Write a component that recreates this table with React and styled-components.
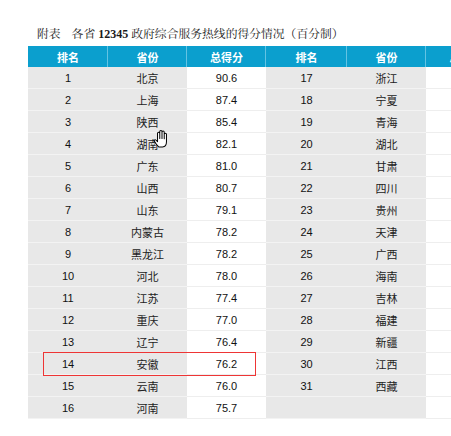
import React from "react";
import styled, { createGlobalStyle } from "styled-components";

const GlobalStyle = createGlobalStyle`
  html, body { margin: 0; padding: 0; background: #ffffff; overflow: hidden; }
  #root { width: 451px; height: 436px; overflow: hidden; }
`;

const Page = styled.div`
  position: relative;
  width: 451px;
  height: 436px;
  overflow: hidden;
  padding-top: 26px;
  box-sizing: border-box;
  background: #ffffff;
  font-family: "Liberation Sans", "Noto Sans CJK SC", sans-serif;
`;

const Title = styled.div`
  margin-left: 37px;
  height: 14px;
  line-height: 14px;
  font-size: 11.8px;
  color: #1a1a1a;
  white-space: nowrap;
  font-family: "Noto Serif CJK SC", "Liberation Serif", "Noto Sans CJK SC", serif;
`;

const Label = styled.span`
  margin-right: 11px;
`;

const Num = styled.b`
  font-family: "Liberation Serif", serif;
  font-weight: 700;
  font-size: 12px;
`;

const Table = styled.div`
  margin-top: 6px;
  margin-left: 28px;
  width: 478px;
  display: grid;
  grid-template-columns: 80px 79px 79px 81px 79px 80px;
`;

const HeadCell = styled.div`
  height: 21px;
  background: #0b9fce;
  color: #ffffff;
  font-family: "Noto Sans CJK SC", sans-serif;
  font-weight: 700;
  font-size: 11px;
  display: flex;
  align-items: center;
  justify-content: center;
  box-shadow: inset -1px 0 0 #63c3e3;
`;

const Cell = styled.div`
  height: 21px;
  border-bottom: 1px solid ${(p) => (p.$white ? "#eeeeee" : "#f3f3f3")};
  background: ${(p) => (p.$white ? "#ffffff" : "#e8e8e8")};
  color: ${(p) => (p.$cjk ? "#222222" : "#111111")};
  font-size: 11px;
  display: flex;
  align-items: center;
  justify-content: center;
  font-family: ${(p) =>
    p.$cjk ? `"Noto Sans CJK SC", sans-serif` : `"Liberation Sans", Arial, sans-serif`};
  font-weight: 400;
`;

const Highlight = styled.div`
  position: absolute;
  left: 43px;
  top: 352px;
  width: 213px;
  height: 24px;
  box-sizing: border-box;
  border: 1px solid #ee3535;
`;

const Cursor = styled.svg`
  position: absolute;
  left: 153px;
  top: 129px;
  width: 18px;
  height: 19px;
`;

const left = [
  ["1", "北京", "90.6"],
  ["2", "上海", "87.4"],
  ["3", "陕西", "85.4"],
  ["4", "湖南", "82.1"],
  ["5", "广东", "81.0"],
  ["6", "山西", "80.7"],
  ["7", "山东", "79.1"],
  ["8", "内蒙古", "78.2"],
  ["9", "黑龙江", "78.2"],
  ["10", "河北", "78.0"],
  ["11", "江苏", "77.4"],
  ["12", "重庆", "77.0"],
  ["13", "辽宁", "76.4"],
  ["14", "安徽", "76.2"],
  ["15", "云南", "76.0"],
  ["16", "河南", "75.7"],
];

const right = [
  ["17", "浙江"],
  ["18", "宁夏"],
  ["19", "青海"],
  ["20", "湖北"],
  ["21", "甘肃"],
  ["22", "四川"],
  ["23", "贵州"],
  ["24", "天津"],
  ["25", "广西"],
  ["26", "海南"],
  ["27", "吉林"],
  ["28", "福建"],
  ["29", "新疆"],
  ["30", "江西"],
  ["31", "西藏"],
  ["", ""],
];

const heads = ["排名", "省份", "总得分", "排名", "省份", "总得分"];

export default function App() {
  return (
    <>
      <GlobalStyle />
      <Page>
        <Title>
          <Label>附表</Label>各省 <Num>12345</Num> 政府综合服务热线的得分情况（百分制）
        </Title>
        <Table>
          {heads.map((h, i) => (
            <HeadCell key={"h" + i}>{h}</HeadCell>
          ))}
          {left.map((row, i) => (
            <React.Fragment key={i}>
              <Cell>{row[0]}</Cell>
              <Cell $cjk>{row[1]}</Cell>
              <Cell $white>{row[2]}</Cell>
              <Cell>{right[i][0]}</Cell>
              <Cell $cjk>{right[i][1]}</Cell>
              <Cell $white></Cell>
            </React.Fragment>
          ))}
        </Table>
        <Highlight />
        <Cursor viewBox="0 0 16 17">
          <path
            d="M5 16 C3.5 14.5 2 12.5 1.2 11 C0.8 10.3 1.2 9.6 1.9 9.6 C2.5 9.6 3 10.2 4 11.3 V4 C4 3.4 4.4 3 5 3 C5.6 3 6 3.4 6 4 V8.5 V2.3 C6 1.7 6.4 1.3 7 1.3 C7.6 1.3 8 1.7 8 2.3 V8.5 V2.8 C8 2.2 8.4 1.8 9 1.8 C9.6 1.8 10 2.2 10 2.8 V8.8 V4.7 C10 4.1 10.4 3.7 11 3.7 C11.6 3.7 12 4.1 12 4.7 V11.5 C12 14 10.8 16 8.5 16 Z"
            fill="#ffffff"
            stroke="#000000"
            strokeWidth="0.9"
            strokeLinejoin="round"
          />
        </Cursor>
      </Page>
    </>
  );
}
